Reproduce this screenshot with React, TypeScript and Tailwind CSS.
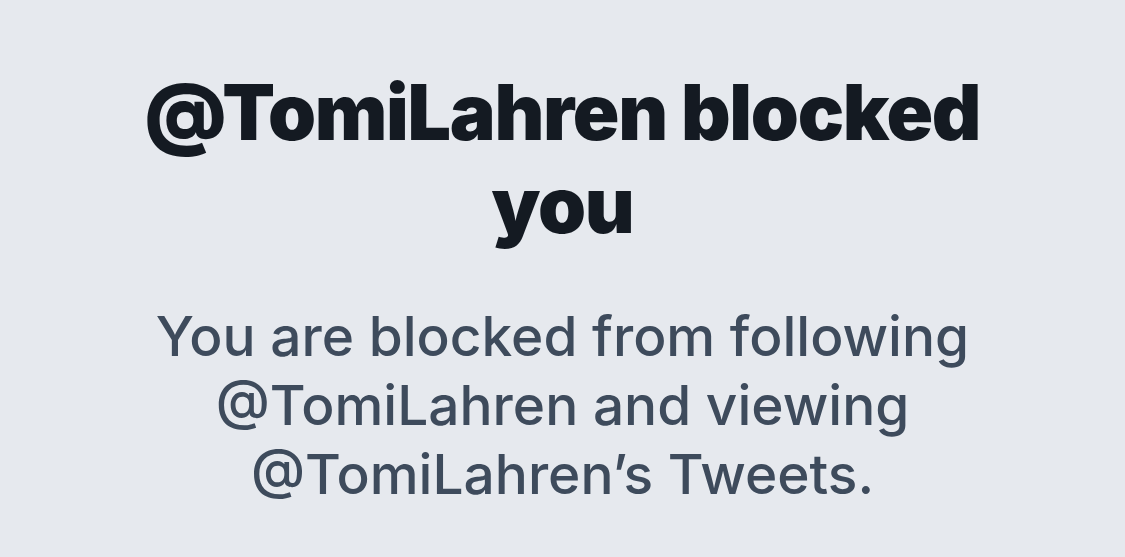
export default function App() {
  return (
    <div className="min-h-screen w-full bg-[#e6e9ee] flex flex-col items-center pt-[66px]" style={{ fontFamily: "Inter, 'Noto Sans', sans-serif" }}>
      <h1 className="w-[880px] text-center text-[77px] leading-[93px] font-black tracking-[-1.3px] text-[#141a22]">
        @TomiLahren blocked you
      </h1>
      <p className="mt-[50px] w-[860px] text-center text-[55px] leading-[69px] font-medium text-[#3e4b5c]">
        You are blocked from following @TomiLahren and viewing @TomiLahren’s Tweets.
      </p>
    </div>
  );
}
